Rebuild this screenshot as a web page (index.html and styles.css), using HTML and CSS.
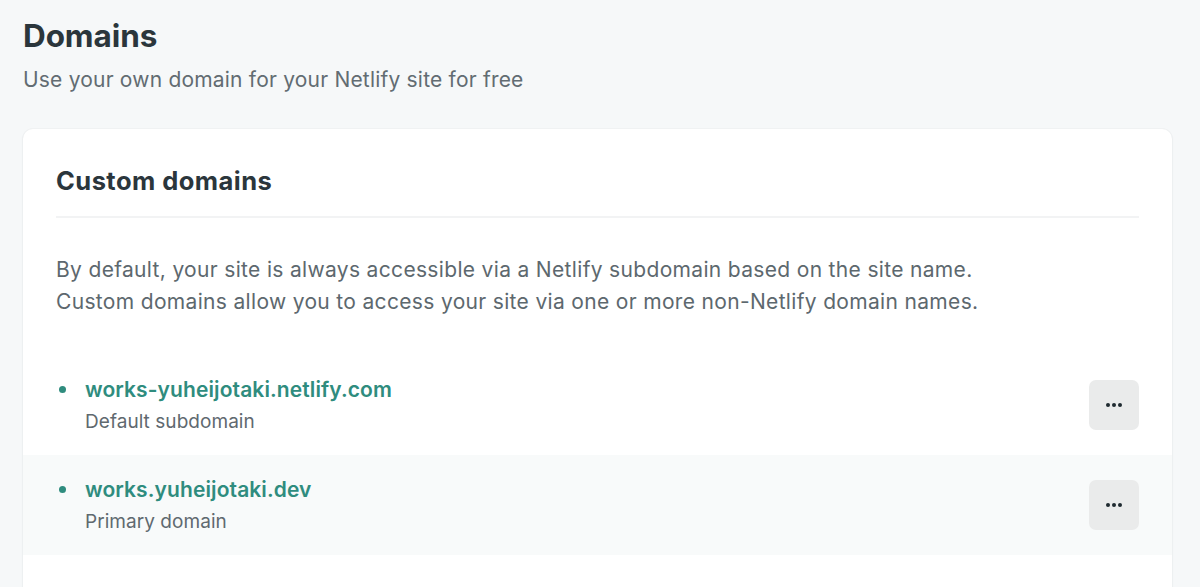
FILE: index.html
```html
<!DOCTYPE html>
<html lang="en">
<head>
<meta charset="utf-8">
<title>Domains</title>
<link rel="stylesheet" href="styles.css">
</head>
<body>
<main class="page">
  <header class="page-header">
    <h1 class="page-title">Domains</h1>
    <p class="page-subtitle">Use your own domain for your Netlify site for free</p>
  </header>
  <section class="card">
    <div class="card-head">
      <h2 class="card-title">Custom domains</h2>
      <div class="divider"></div>
      <p class="card-text">By default, your site is always accessible via a Netlify subdomain based on the site name.<br>Custom domains allow you to access your site via one or more non-Netlify domain names.</p>
    </div>
    <ul class="domain-list">
      <li class="domain-row">
        <div class="domain-info">
          <div class="domain-name"><span class="bullet"></span><a class="domain-link" href="#">works-yuheijotaki.netlify.com</a></div>
          <div class="domain-kind">Default subdomain</div>
        </div>
        <button class="more-btn" type="button" aria-label="Options"><span class="dot"></span><span class="dot"></span><span class="dot"></span></button>
      </li>
      <li class="domain-row domain-row-alt">
        <div class="domain-info">
          <div class="domain-name"><span class="bullet"></span><a class="domain-link" href="#">works.yuheijotaki.dev</a></div>
          <div class="domain-kind">Primary domain</div>
        </div>
        <button class="more-btn" type="button" aria-label="Options"><span class="dot"></span><span class="dot"></span><span class="dot"></span></button>
      </li>
    </ul>
  </section>
</main>
</body>
</html>
```
FILE: styles.css
```css
* { box-sizing: border-box; }
html, body {
  margin: 0;
  padding: 0;
  background: #f6f8f9;
  font-family: "Inter", "Noto Sans", "Liberation Sans", sans-serif;
  color: #2d3a40;
}
.page {
  padding: 18px 28px 0 23px;
}
.page-title {
  margin: 0;
  font-size: 31.5px;
  line-height: 36px;
  font-weight: 700;
  color: #2b363c;
  letter-spacing: -0.1px;
}
.page-subtitle {
  margin: 12px 0 0;
  font-size: 21px;
  line-height: 28px;
  color: #626c72;
  letter-spacing: 0.2px;
}
.card {
  margin-top: 35px;
  background: #ffffff;
  border-radius: 10px;
  box-shadow: 0 0 0 1px rgba(30, 50, 60, 0.025), 0 1px 3px rgba(30, 50, 60, 0.05);
  padding-bottom: 60px;
}
.card-head {
  padding: 37px 33px 0;
}
.card-title {
  margin: 0;
  font-size: 25.5px;
  line-height: 30px;
  font-weight: 700;
  color: #2b363c;
  letter-spacing: 0.45px;
}
.divider {
  margin-top: 20px;
  height: 2px;
  background: #f2f3f4;
}
.card-text {
  margin: 36px 0 0;
  font-size: 21px;
  line-height: 32px;
  color: #5d686e;
  letter-spacing: 0.33px;
}
.domain-list {
  list-style: none;
  margin: 37px 0 0;
  padding: 0;
}
.domain-row {
  display: flex;
  align-items: center;
  justify-content: space-between;
  height: 100px;
  padding: 0 33px;
}
.domain-row-alt {
  background: #f8fafa;
}
.domain-name {
  display: flex;
  align-items: center;
  gap: 19px;
}
.bullet {
  width: 7px;
  height: 7px;
  margin-left: 3px;
  border-radius: 50%;
  background: #2f8c7e;
}
.domain-link {
  font-size: 21px;
  line-height: 28px;
  font-weight: 600;
  color: #2f8c7e;
  text-decoration: none;
  letter-spacing: 0.1px;
}
.domain-kind {
  margin-top: 5px;
  padding-left: 29px;
  font-size: 19px;
  line-height: 26px;
  color: #5f696f;
  letter-spacing: 0.05px;
}
.more-btn {
  width: 50px;
  height: 50px;
  border: 0;
  border-radius: 7px;
  background: #eaebeb;
  display: flex;
  align-items: center;
  justify-content: center;
  gap: 2px;
  padding: 0;
  cursor: pointer;
}
.dot {
  width: 4px;
  height: 4px;
  border-radius: 50%;
  background: #1f2a30;
}
```
